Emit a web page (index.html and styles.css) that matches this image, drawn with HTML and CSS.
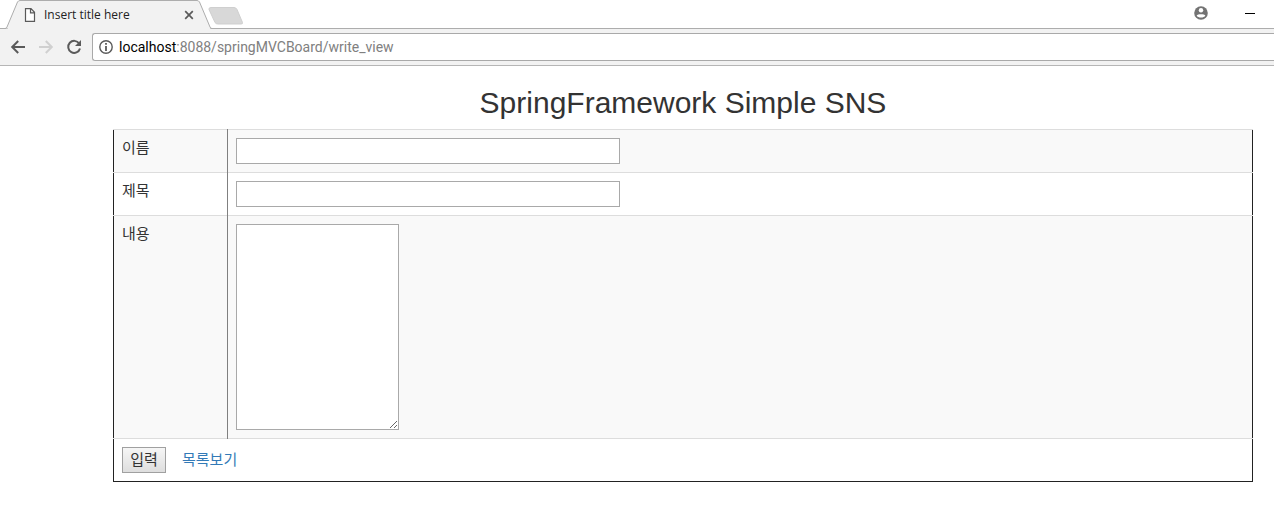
FILE: index.html
```html
<!DOCTYPE html>
<html lang="ko">
<head>
<meta charset="utf-8">
<title>Insert title here</title>
<link rel="stylesheet" href="styles.css">
</head>
<body>
<header class="browser">
  <div class="tab-strip">
    <div class="tab">
      <svg class="tab-shape" width="212" height="29" viewBox="0 0 212 29" aria-hidden="true"><path d="M0 28.500H5Q6.500 28.500 7 27L17.500 2Q18.500 .5 20 .5H197Q198.500 .5 199.500 2L210 27Q210.500 28.500 212 28.500" fill="#f2f2f2" stroke="#adadad"/><path d="M8 28.500H210" stroke="#f2f2f2"/></svg>
      <svg class="tab-icon" width="12" height="14" viewBox="0 0 12 14" aria-hidden="true"><path d="M1.500 .7H7L10.500 4.300V13.300H1.500ZM6.500 .7V4.800H10.500" fill="#fff" stroke="#5a5a5a" stroke-width="1.200"/></svg>
      <span class="tab-title">Insert title here</span>
      <button class="icon-button tab-close" type="button" aria-label="Close tab"><svg width="10" height="10" viewBox="0 0 10 10"><path d="M1.200 1.200L8.800 8.800M8.800 1.200L1.200 8.800" stroke="#5a5a5a" stroke-width="1.700"/></svg></button>
    </div>
    <button class="icon-button new-tab" type="button" aria-label="New tab"><svg width="36" height="19" viewBox="0 0 36 19"><path d="M3 .5H26Q28 .5 29 2.500L34.500 15.500Q35 17 33 17H10Q8 17 7 15.500L1 2.500Q.5 .5 3 .5Z" fill="#d8d8d8" stroke="#cfcfcf"/></svg></button>
    <div class="window-controls">
      <button class="icon-button" type="button" aria-label="Profile"><svg width="14" height="14" viewBox="0 0 14 14"><circle cx="7" cy="7" r="6.800" fill="#737373"/><circle cx="7" cy="4.300" r="2.200" fill="#fff"/><path d="M2.700 9.500C3.400 7.700 10.600 7.700 11.300 9.500C10.200 12.200 3.800 12.200 2.700 9.500Z" fill="#fff"/></svg></button>
      <button class="icon-button" type="button" aria-label="Minimize"><svg width="10" height="14" viewBox="0 0 10 14"><path d="M0 7.500H10" stroke="#000"/></svg></button>
    </div>
  </div>
  <div class="toolbar">
    <button class="icon-button" type="button" aria-label="Back"><svg width="16" height="16" viewBox="0 0 16 16"><path d="M15 8H2.500M8.200 2L2.200 8L8.200 14" fill="none" stroke="#5a5a5a" stroke-width="2"/></svg></button>
    <button class="icon-button" type="button" aria-label="Forward"><svg width="16" height="16" viewBox="0 0 16 16"><path d="M1 8H13.500M7.800 2L13.800 8L7.800 14" fill="none" stroke="#d0d0d0" stroke-width="2"/></svg></button>
    <button class="icon-button" type="button" aria-label="Reload"><svg width="16" height="16" viewBox="0 0 16 16"><path d="M13.200 4.500A6 6 0 1 0 14 9.500" fill="none" stroke="#5a5a5a" stroke-width="2"/><path d="M15 1V7H9Z" fill="#5a5a5a"/></svg></button>
    <div class="omnibox">
      <svg width="14" height="14" viewBox="0 0 14 14" aria-hidden="true"><circle cx="7" cy="7" r="6.200" fill="none" stroke="#5a5a5a" stroke-width="1.400"/><path d="M7 6V11M7 3V4.800" stroke="#5a5a5a" stroke-width="1.800"/></svg>
      <span class="url"><span class="host">localhost</span>:8088/springMVCBoard/write_view</span>
    </div>
  </div>
</header>
<main class="container">
  <h2 class="title">SpringFramework Simple SNS</h2>
  <form>
    <table class="board">
      <tr>
        <td class="label-cell"><label for="name">이름</label></td>
        <td><input class="field" id="name" type="text"></td>
      </tr>
      <tr>
        <td class="label-cell"><label for="subject">제목</label></td>
        <td><input class="field" id="subject" type="text"></td>
      </tr>
      <tr>
        <td class="label-cell"><label for="content">내용</label></td>
        <td><textarea class="content" id="content"></textarea></td>
      </tr>
      <tr>
        <td colspan="2">
          <div class="actions">
            <button class="submit" type="submit">입력</button>
            <a class="list-link" href="#">목록보기</a>
          </div>
        </td>
      </tr>
    </table>
  </form>
</main>
</body>
</html>
```
FILE: styles.css
```css
* {
  box-sizing: border-box;
}

body {
  margin: 0;
  background: #fff;
  color: #333;
  font: 15px/20px "Liberation Sans", "Noto Sans CJK KR", sans-serif;
}

svg {
  display: block;
  flex: none;
}

.icon-button {
  padding: 0;
  border: 0;
  background: none;
}

.tab-strip {
  display: flex;
  height: 29px;
  border-bottom: 1px solid #adadad;
}

.tab {
  position: relative;
  display: flex;
  align-items: center;
  width: 212px;
  height: 29px;
  padding: 0 18px 0 24px;
}

.tab-shape {
  position: absolute;
  top: 0;
  left: 0;
}

.tab-icon,
.tab-title,
.tab-close {
  position: relative;
}

.tab-title {
  flex: 1;
  margin-left: 8px;
  color: #222;
  font: 12px/16px "Open Sans", sans-serif;
}

.new-tab {
  align-self: flex-start;
  margin: 7px 0 0 -4px;
}

.window-controls {
  display: flex;
  align-items: flex-start;
  gap: 37px;
  margin-left: auto;
  padding: 6px 19px 0 0;
}

.toolbar {
  display: flex;
  align-items: center;
  gap: 12px;
  height: 37px;
  padding-left: 10px;
  border-bottom: 1px solid #b6b6b6;
  background: #f2f2f2;
}

.omnibox {
  display: flex;
  flex: 1;
  align-items: center;
  gap: 6px;
  height: 28px;
  margin-left: -2px;
  padding-left: 6px;
  border: 1px solid #a9a9a9;
  border-right: 0;
  border-radius: 3px 0 0 3px;
  background: #fff;
}

.url {
  color: #808080;
  font: 14px/20px Roboto, sans-serif;
}

.host {
  color: #000;
}

.container {
  padding: 20px 21px 32px 113px;
}

.title {
  margin: 0 0 10px;
  font-size: 30px;
  font-weight: 400;
  line-height: 33px;
  text-align: center;
}

.board {
  width: 100%;
  border: 1px solid #222;
  border-collapse: collapse;
}

.board td {
  padding: 8px;
  border-top: 1px solid #ddd;
  vertical-align: top;
}

.board tr:nth-child(odd) {
  background: #f9f9f9;
}

.board .label-cell {
  width: 114px;
  border-right: 1px solid #808080;
}

.field,
.content {
  display: block;
  border: 1px solid #a9a9a9;
  background: #fff;
  font: inherit;
}

.field {
  width: 384px;
  height: 26px;
}

.content {
  width: 163px;
  height: 206px;
}

.actions {
  display: flex;
  gap: 16px;
}

.submit {
  width: 44px;
  height: 26px;
  padding: 0;
  border: 1px solid #a0a0a0;
  border-radius: 0;
  background: linear-gradient(#f6f6f6, #dedede);
  color: #333;
  font: inherit;
}

.list-link {
  color: #337ab7;
  line-height: 26px;
  text-decoration: none;
}
```
